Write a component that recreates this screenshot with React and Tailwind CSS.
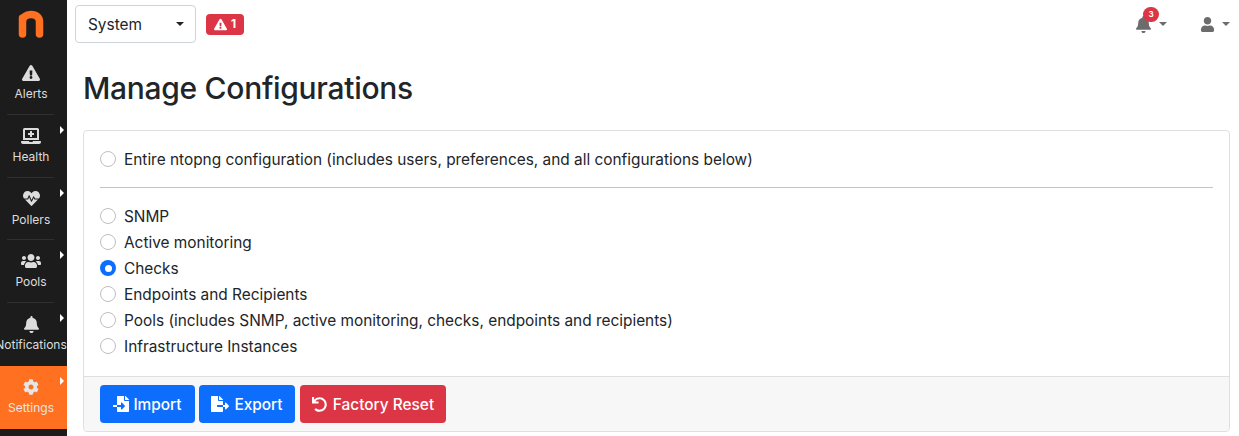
import React from "react";
import { FaExclamationTriangle, FaLaptopMedical, FaHeartbeat, FaUsers, FaBell, FaCog, FaFileImport, FaFileExport, FaUndo, FaUser } from "react-icons/fa";

const items = [
  { label: "Alerts", Icon: FaExclamationTriangle, size: 18 },
  { label: "Health", Icon: FaLaptopMedical, arrow: true, size: 20 },
  { label: "Pollers", Icon: FaHeartbeat, arrow: true, size: 17 },
  { label: "Pools", Icon: FaUsers, arrow: true, size: 20 },
  { label: "Notifications", Icon: FaBell, arrow: true, size: 17 },
  { label: "Settings", Icon: FaCog, arrow: true, active: true, size: 16 },
];

const Caret = ({ className }) => (
  <span className={`inline-block w-0 h-0 border-x-[4px] border-x-transparent border-t-[4px] ${className}`} />
);

function Radio({ label, checked }) {
  return (
    <label className="flex items-center h-[26px]">
      {checked ? (
        <span className="w-4 h-4 rounded-full bg-[#0d6efd] flex items-center justify-center shrink-0">
          <span className="w-[7px] h-[7px] rounded-full bg-white" />
        </span>
      ) : (
        <span className="w-4 h-4 rounded-full bg-white border border-[#bfbfbf] shrink-0" />
      )}
      <span className="ml-2 pt-[2px] text-[15.4px] text-[#212529]">{label}</span>
    </label>
  );
}

function Btn({ color, Icon, label, w, iconSize = 16, gap }) {
  return (
    <button className={`h-[38px] rounded-[4px] text-white text-[15.4px] font-medium flex items-center justify-center ${gap} ${color} ${w}`}>
      <Icon size={iconSize} />
      <span className="pt-[2px]">{label}</span>
    </button>
  );
}

export default function App() {
  return (
    <div className="flex w-[1239px] h-[436px] overflow-hidden bg-white font-['Inter',sans-serif]">
      <aside className="w-[67px] shrink-0 bg-[#1c1c1c] flex flex-col overflow-hidden">
        <div className="h-[52px] shrink-0 flex items-start justify-center pt-[10px] pr-[5px]">
          <svg width="26" height="28" viewBox="0 0 26 28">
            <path d="M4.5 24 V8 M4.5 12 C4.5 7 8 4.5 13 4.5 C18.5 4.5 21.5 7.5 21.5 12 V24" fill="none" stroke="#ff7120" strokeWidth="7.5" strokeLinecap="round" strokeLinejoin="round" />
          </svg>
        </div>
        {items.map(({ label, Icon, arrow, active, size }) => (
          <div key={label} className={`relative h-[62.8px] shrink-0 flex flex-col items-center pt-[12px] ${active ? "bg-[#ff7120] text-[#e6e6e6]" : "text-[#dcdcdc]"}`}>
            <div className="w-[62px] flex flex-col items-center mr-[5px]">
              <div className="h-[18px] flex items-center justify-center">
                <Icon size={size} />
              </div>
              <span className="mt-[4px] text-[12px] leading-[16px] whitespace-nowrap">{label}</span>
            </div>
            {arrow && (
              <span className="absolute right-[3px] top-[11px] w-0 h-0 border-y-[4px] border-y-transparent border-l-[4px] border-l-white" />
            )}
            {!active && label !== "Notifications" && (
              <span className="absolute bottom-0 left-[7px] right-[13px] h-px bg-[#2f2f2f]" />
            )}
          </div>
        ))}
      </aside>

      <main className="flex-1 min-w-0 flex flex-col">
        <header className="h-[48px] shrink-0 flex items-center pl-[8px] pr-[9px]">
          <div className="w-[121px] h-[38px] border border-[#ced4da] rounded-[4px] flex items-center justify-between pl-[12px] pr-[11px] text-[15.4px] text-[#212529]">
            <span className="pt-px">System</span>
            <Caret className="border-t-[#212529]" />
          </div>
          <span className="ml-[10px] w-[38px] h-[21px] rounded-[4px] bg-[#dc3545] text-white text-[12px] font-bold flex items-center justify-center gap-[4px]">
            <FaExclamationTriangle size={13} />1
          </span>
          <div className="ml-auto flex items-center text-[#6c6c6c]">
            <span className="relative flex items-center">
              <FaBell size={17} />
              <span className="absolute -top-[9px] left-[8px] w-[16px] h-[15px] rounded-full bg-[#dc3545] text-white text-[8px] font-bold flex items-center justify-center">3</span>
            </span>
            <Caret className="ml-[7px] border-t-[#6c6c6c]" />
            <FaUser size={15} className="ml-[33px]" />
            <Caret className="ml-[7px] border-t-[#6c6c6c]" />
          </div>
        </header>

        <h1 className="mt-[19px] ml-[16px] text-[30px] leading-[42px] font-medium text-[#212529] tracking-[-0.3px]">Manage Configurations</h1>

        <section className="mt-[21px] ml-[16px] w-[1147px] h-[302px] border border-[#dfdfdf] rounded-[4px] flex flex-col">
          <div className="flex-1 px-[16px] pt-[15px]">
            <Radio label="Entire ntopng configuration (includes users, preferences, and all configurations below)" />
            <hr className="mt-[15px] mb-[15px] border-t border-[#c4c4c4]" />
            <Radio label="SNMP" />
            <Radio label="Active monitoring" />
            <Radio label="Checks" checked />
            <Radio label="Endpoints and Recipients" />
            <Radio label="Pools (includes SNMP, active monitoring, checks, endpoints and recipients)" />
            <Radio label="Infrastructure Instances" />
          </div>
          <div className="h-[55px] shrink-0 bg-[#f7f7f7] border-t border-[#dfdfdf] rounded-b-[4px] flex items-center gap-[4px] px-[16px]">
            <Btn color="bg-[#0d6efd]" Icon={FaFileImport} label="Import" w="w-[95px]" gap="gap-[4px]" />
            <Btn color="bg-[#0d6efd]" Icon={FaFileExport} label="Export" w="w-[96px]" iconSize={18} gap="gap-[5px]" />
            <Btn color="bg-[#dc3545] ml-px" Icon={FaUndo} label="Factory Reset" w="w-[146px]" iconSize={15} gap="gap-[6px]" />
          </div>
        </section>
      </main>
    </div>
  );
}
